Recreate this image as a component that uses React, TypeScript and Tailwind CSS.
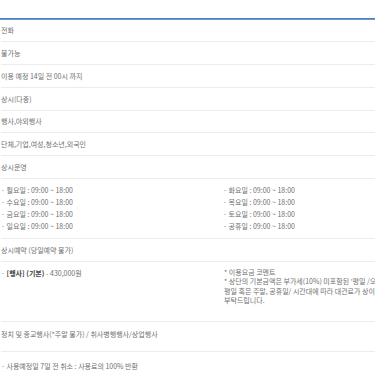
const hoursLeft = ["월요일", "수요일", "금요일", "일요일"];
const hoursRight = ["화요일", "목요일", "토요일", "공휴일"];

function Row({ children, className = "" }: { children: React.ReactNode; className?: string }) {
  return <div className={`border-b border-[#ececec] flex items-center ${className}`}>{children}</div>;
}

export default function App() {
  return (
    <div
      className="w-[375px] h-[375px] overflow-hidden bg-white text-[#707070] text-[7px]"
      style={{ fontFamily: '"Noto Sans CJK KR", "Noto Sans", sans-serif' }}
    >
      <div className="w-[460px] pt-[18px] pl-px">
        <div className="h-[2px] bg-[#6f9bd4] border-t border-[#4c7fc2] -ml-px" />

        <Row className="h-[22px]">전화</Row>
        <Row className="h-[23px]">불가능</Row>
        <Row className="h-[23px]">이용 예정 14일 전 00시 까지</Row>
        <Row className="h-[23px]">상시(다중)</Row>
        <Row className="h-[22px]">행사,야외행사</Row>
        <Row className="h-[23px]">단체,기업,여성,청소년,외국인</Row>
        <Row className="h-[23px]">상시운영</Row>

        {/* 운영시간 */}
        <div className="border-b border-[#ececec] h-[60px] pt-[5px] grid grid-cols-[222px_1fr] leading-[12px]">
          <div>
            {hoursLeft.map((d) => (
              <div key={d}>· {d} : 09:00 ~ 18:00</div>
            ))}
          </div>
          <div>
            {hoursRight.map((d) => (
              <div key={d}>· {d} : 09:00 ~ 18:00</div>
            ))}
          </div>
        </div>

        <Row className="h-[23px]">상시예약 (당일예약 불가)</Row>

        {/* 이용요금 */}
        <div className="border-b border-[#ececec] h-[60px] pt-[6px] grid grid-cols-[223px_1fr]">
          <div className="leading-[10px]">
            · <span className="font-bold text-[#444]">[행사] (기본)</span> - 430,000원
          </div>
          <div className="leading-[9.3px] whitespace-nowrap">
            <div>* 이용요금 코멘트</div>
            <div>* 상단의 기본금액은 부가세(10%) 미포함된 '평일 /오전' 기준 금액이며,</div>
            <div>평일 혹은 주말, 공휴일/ 시간대에 따라 대관료가 상이하오니 참고</div>
            <div>부탁드립니다.</div>
          </div>
        </div>

        <div className="border-b border-[#ececec] h-[30px] pt-[7px] leading-[10px]">
          정치 및 종교행사(*주말 불가) / 취사병행행사/상업행사
        </div>

        <div className="pt-[9px] leading-[10px]">· 사용예정일 7일 전 취소 : 사용료의 100% 반환</div>
      </div>
    </div>
  );
}
